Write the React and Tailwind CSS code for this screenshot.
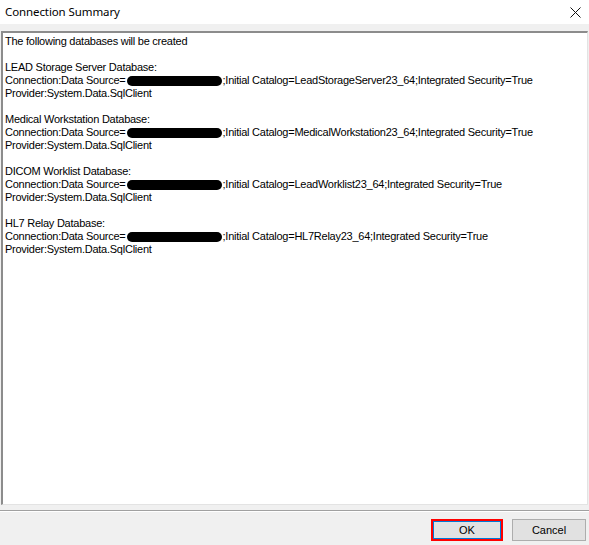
import React from 'react';

const body = { fontFamily: '"Liberation Sans", Arial, sans-serif' };

function Redacted() {
    return <span className="inline-block h-[10px] w-[95px] rounded-full bg-black align-middle mx-[1px]" />;
}

const dbs = [
    { name: 'LEAD Storage Server Database:', catalog: 'LeadStorageServer23_64' },
    { name: 'Medical Workstation Database:', catalog: 'MedicalWorkstation23_64' },
    { name: 'DICOM Worklist Database:', catalog: 'LeadWorklist23_64' },
    { name: 'HL7 Relay Database:', catalog: 'HL7Relay23_64' },
];

export default function App() {
    return (
        <div className="w-[589px] h-[545px] bg-[#f0f0f0] flex flex-col overflow-hidden">
            <div className="h-[24px] bg-white flex items-center justify-between pl-[5px] pr-[7px]">
                <span className="text-[11.5px] text-black tracking-[-0.1px]" style={{ fontFamily: '"Noto Sans", "Open Sans", sans-serif' }}>
                    Connection Summary
                </span>
                <svg width="11" height="11" viewBox="0 0 11 11" className="mr-[1px]">
                    <path d="M0.5 0.5 L10.5 10.5 M10.5 0.5 L0.5 10.5" stroke="#111" strokeWidth="1" fill="none" />
                </svg>
            </div>
            <div className="mt-[7px] mx-[1px] h-[474px] bg-white border-t-2 border-l-2 border-r border-b border-t-[#8c8c8c] border-l-[#8c8c8c] border-r-[#e3e3e3] border-b-[#e3e3e3]">
                <div className="pl-[2px] pt-[2px] text-[11px] leading-[13px] tracking-[-0.25px] text-black" style={body}>
                    <div>The following databases will be created</div>
                    <div className="h-[13px]" />
                    {dbs.map((d) => (
                        <div key={d.name} className="mb-[13px]">
                            <div>{d.name}</div>
                            <div className="flex items-center whitespace-nowrap">
                                <span>Connection:Data Source=</span>
                                <Redacted />
                                <span>;Initial Catalog={d.catalog};Integrated Security=True</span>
                            </div>
                            <div>Provider:System.Data.SqlClient</div>
                        </div>
                    ))}
                </div>
            </div>
            <div className="mt-[5px] h-px bg-[#a0a0a0]" />
            <div className="h-px bg-white" />
            <div className="flex justify-end gap-[9px] pr-[3px] pt-[7px]" style={body}>
                <button className="w-[72px] h-[22px] bg-[#e1e1e1] border-2 border-[#ff0000] text-[11px] text-black flex items-center justify-center">
                    <span className="w-full h-full border border-[#0078d7] flex items-center justify-center">OK</span>
                </button>
                <button className="w-[74px] h-[22px] bg-[#e1e1e1] border border-[#adadad] text-[11px] text-black flex items-center justify-center">
                    Cancel
                </button>
            </div>
        </div>
    );
}
